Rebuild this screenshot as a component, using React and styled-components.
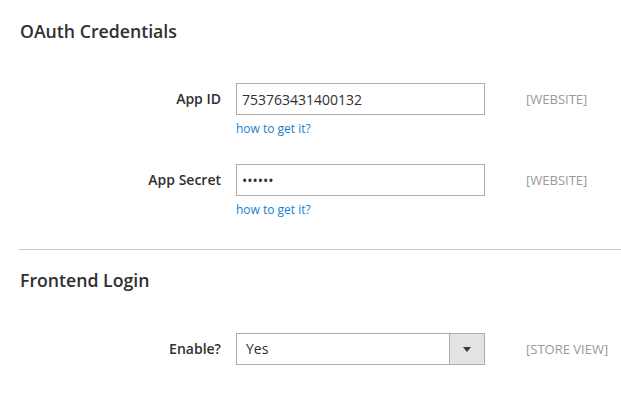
import React from "react";
import styled, { createGlobalStyle } from "styled-components";

const Global = createGlobalStyle`
  html, body { margin: 0; padding: 0; background: #fff; }
  body { font-family: "Open Sans", "Liberation Sans", sans-serif; color: #303030; }
`;

const Page = styled.div`
  padding-left: 19px;
  width: 602px;
`;

const Section = styled.section`
  padding-top: ${(p) => p.$top}px;
  padding-bottom: ${(p) => p.$bottom}px;
  border-bottom: ${(p) => (p.$divider ? "1px solid #cccccc" : "none")};
`;

const Heading = styled.h2`
  margin: 0 0 ${(p) => p.$gap}px 1px;
  font-size: 17.7px;
  line-height: 24px;
  font-weight: 600;
  color: #303030;
`;

const Row = styled.div`
  display: grid;
  grid-template-columns: 202px 249px auto;
  column-gap: 15px;
  align-items: start;
  margin-bottom: ${(p) => p.$gap}px;
`;

const Label = styled.label`
  text-align: right;
  font-size: 14px;
  font-weight: 600;
  line-height: 32px;
  color: #303030;
`;

const Control = styled.div`
  display: flex;
  flex-direction: column;
`;

const TextInput = styled.input`
  box-sizing: border-box;
  width: 249px;
  height: 32px;
  margin: 0;
  border: 1px solid #adadad;
  border-radius: 0;
  padding: 0 5px;
  font-family: "Open Sans", "Liberation Sans", sans-serif;
  font-size: 14px;
  color: #303030;
  background: #fff;
  outline: none;
`;

const Note = styled.a`
  margin-top: 5px;
  font-size: 12px;
  line-height: 18px;
  color: #1a7fd0;
  text-decoration: none;
`;

const Scope = styled.span`
  margin-left: 26px;
  font-size: 13px;
  line-height: 32px;
  color: #999999;
  white-space: nowrap;
`;

const Select = styled.div`
  box-sizing: border-box;
  width: 249px;
  height: 32px;
  border: 1px solid #adadad;
  display: flex;
  align-items: stretch;
  background: #fff;
`;

const SelectValue = styled.span`
  flex: 1;
  padding-left: 9px;
  font-size: 14px;
  line-height: 30px;
  color: #303030;
`;

const SelectButton = styled.span`
  width: 34px;
  border-left: 1px solid #adadad;
  background: #e3e3e3;
  display: flex;
  align-items: center;
  justify-content: center;
`;

const Arrow = styled.span`
  width: 0;
  height: 0;
  border-left: 4px solid transparent;
  border-right: 4px solid transparent;
  border-top: 5px solid #41362f;
  margin-top: 1px;
`;

export default function App() {
  return (
    <>
      <Global />
      <Page>
        <Section $top={19} $bottom={30} $divider>
          <Heading $gap={40}>OAuth Credentials</Heading>
          <Row $gap={26}>
            <Label>App ID</Label>
            <Control>
              <TextInput type="text" defaultValue="753763431400132" />
              <Note href="#">how to get it?</Note>
            </Control>
            <Scope>[WEBSITE]</Scope>
          </Row>
          <Row $gap={0}>
            <Label>App Secret</Label>
            <Control>
              <TextInput type="password" defaultValue="abcdef" />
              <Note href="#">how to get it?</Note>
            </Control>
            <Scope>[WEBSITE]</Scope>
          </Row>
        </Section>
        <Section $top={18} $bottom={0}>
          <Heading $gap={41}>Frontend Login</Heading>
          <Row $gap={0}>
            <Label>Enable?</Label>
            <Control>
              <Select>
                <SelectValue>Yes</SelectValue>
                <SelectButton>
                  <Arrow />
                </SelectButton>
              </Select>
            </Control>
            <Scope>[STORE VIEW]</Scope>
          </Row>
        </Section>
      </Page>
    </>
  );
}
